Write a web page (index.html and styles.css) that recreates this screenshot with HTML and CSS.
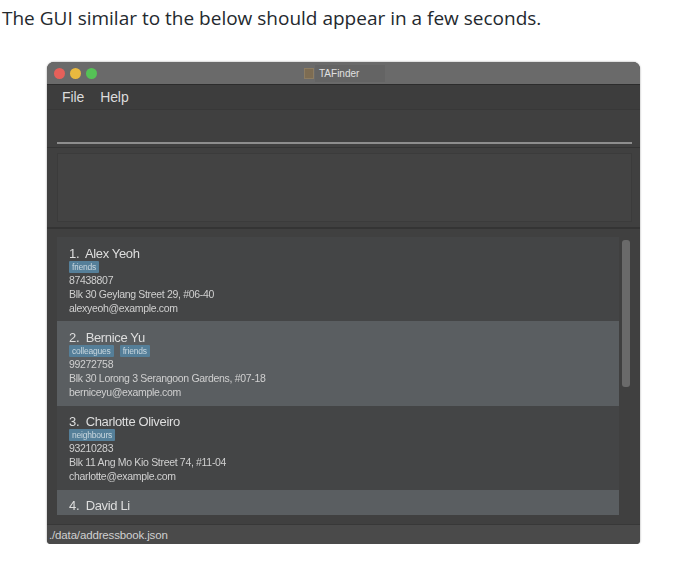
FILE: index.html
```html
<!DOCTYPE html>
<html lang="en">
<head>
    <meta charset="UTF-8">
    <meta name="viewport" content="width=device-width, initial-scale=1.0">
    <title>TAFinder</title>
    <link rel="stylesheet" href="styles.css">
</head>
<body>
    <p class="intro">The GUI similar to the below should appear in a few seconds.</p>

    <div class="window">
        <div class="titlebar">
            <div class="lights">
                <span class="light red"></span>
                <span class="light yellow"></span>
                <span class="light green"></span>
            </div>
            <div class="title">
                <span class="title-icon"></span>
                <span class="title-text">TAFinder</span>
            </div>
        </div>

        <div class="menu">
            <span>File</span>
            <span>Help</span>
        </div>

        <div class="command">
            <div class="command-line"></div>
        </div>

        <div class="result">
            <div class="result-box"></div>
        </div>

        <div class="list-pane">
            <div class="list">
                <div class="card">
                    <div class="name">1.&nbsp; Alex Yeoh</div>
                    <div class="tags"><span class="tag">friends</span></div>
                    <div class="line">87438807</div>
                    <div class="line">Blk 30 Geylang Street 29, #06-40</div>
                    <div class="line">alexyeoh@example.com</div>
                </div>
                <div class="card alt">
                    <div class="name">2.&nbsp; Bernice Yu</div>
                    <div class="tags"><span class="tag">colleagues</span><span class="tag">friends</span></div>
                    <div class="line">99272758</div>
                    <div class="line">Blk 30 Lorong 3 Serangoon Gardens, #07-18</div>
                    <div class="line">berniceyu@example.com</div>
                </div>
                <div class="card">
                    <div class="name">3.&nbsp; Charlotte Oliveiro</div>
                    <div class="tags"><span class="tag">neighbours</span></div>
                    <div class="line">93210283</div>
                    <div class="line">Blk 11 Ang Mo Kio Street 74, #11-04</div>
                    <div class="line">charlotte@example.com</div>
                </div>
                <div class="card alt">
                    <div class="name">4.&nbsp; David Li</div>
                </div>
            </div>
            <div class="scrollbar">
                <div class="thumb"></div>
            </div>
        </div>

        <div class="status">./data/addressbook.json</div>
    </div>
</body>
</html>
```

FILE: styles.css
```css
body {
    margin: 0;
    background-color: #fff;
    font-family: 'Liberation Sans', sans-serif;
}
.intro {
    margin: 0;
    padding: 5px 0 0 2px;
    height: 62px;
    box-sizing: border-box;
    font-family: 'Open Sans', sans-serif;
    font-size: 19px;
    line-height: 26px;
    color: #24292e;
}

/* the window is a blurry picture in the original, so soften it a little */
.window {
    width: 593px;
    height: 482px;
    margin-left: 47px;
    display: flex;
    flex-direction: column;
    background-color: #414141;
    border-radius: 7px 7px 4px 4px;
    overflow: hidden;
    box-shadow: 0 0 2px rgba(0, 0, 0, 0.45);
    filter: blur(0.6px);
}
.titlebar {
    height: 22px;
    flex: none;
    display: flex;
    align-items: center;
    position: relative;
    background-color: #6a6a6a;
    border-bottom: 1px solid #2c2c2c;
}
.lights {
    display: flex;
    gap: 5px;
    padding-left: 7px;
}
.light {
    width: 11px;
    height: 11px;
    border-radius: 50%;
}
.red { background-color: #e5605a; }
.yellow { background-color: #e9b93f; }
.green { background-color: #55c256; }
.title {
    position: absolute;
    left: 257px;
    top: 3px;
    height: 17px;
    display: flex;
    align-items: center;
}
.title-icon {
    width: 8px;
    height: 9px;
    background-color: #7d6c52;
    border: 1px solid #8c7c62;
}
.title-text {
    width: 70px;
    height: 17px;
    box-sizing: border-box;
    margin-left: 1px;
    padding-left: 4px;
    background-color: #646464;
    color: #e0e0e0;
    font-size: 10px;
    line-height: 17px;
}
.menu {
    height: 25px;
    flex: none;
    display: flex;
    gap: 16px;
    align-items: center;
    padding-left: 15px;
    box-sizing: border-box;
    background-color: #3d3d3d;
    border-bottom: 1px solid #383838;
    color: #dcdcdc;
    font-size: 14px;
    letter-spacing: -0.1px;
}
.command {
    height: 38px;
    flex: none;
    box-sizing: border-box;
    padding: 32px 8px 0 10px;
    background-color: #404040;
    border-bottom: 1px solid #343434;
}
.command-line {
    height: 2px;
    background-color: #8e8e8e;
}
.result {
    height: 81px;
    flex: none;
    box-sizing: border-box;
    padding: 5px 8px 5px 10px;
    background-color: #404040;
    border-bottom: 2px solid #343434;
}
.result-box {
    height: 100%;
    box-sizing: border-box;
    background-color: #434343;
    border: 1px solid #3b3b3b;
}
.list-pane {
    height: 295px;
    flex: none;
    box-sizing: border-box;
    padding: 8px 8px 9px 10px;
    display: flex;
    background-color: #404040;
}
.list {
    width: 562px;
    flex: none;
    overflow: hidden;
}
.card {
    height: 84.3px;
    box-sizing: border-box;
    padding: 8.5px 0 0 12px;
    background-color: #444546;
    color: #d0d0d0;
    overflow: hidden;
}
.card.alt {
    background-color: #5a5e61;
}
.name {
    height: 16px;
    font-size: 13px;
    line-height: 16px;
    letter-spacing: -0.35px;
    color: #dedede;
}
.tags {
    display: flex;
    gap: 6px;
    height: 12px;
    margin-top: -1px;
}
.tag {
    padding: 0 3px;
    background-color: #557f99;
    border-radius: 1px;
    color: #c8d6de;
    font-size: 8.5px;
    line-height: 12px;
    letter-spacing: -0.2px;
}
.line {
    height: 14px;
    font-size: 10.5px;
    line-height: 14px;
    letter-spacing: -0.32px;
}
.scrollbar {
    flex: 1;
    padding: 3px 0 0 3px;
}
.thumb {
    width: 8px;
    height: 147px;
    background-color: #6a6a6a;
    border-radius: 3px;
}
.status {
    flex: 1;
    padding-left: 2px;
    background-color: #4a4a4a;
    border-top: 1px solid #383838;
    color: #d0d0d0;
    font-size: 11.5px;
    line-height: 20px;
    letter-spacing: -0.15px;
}
```
